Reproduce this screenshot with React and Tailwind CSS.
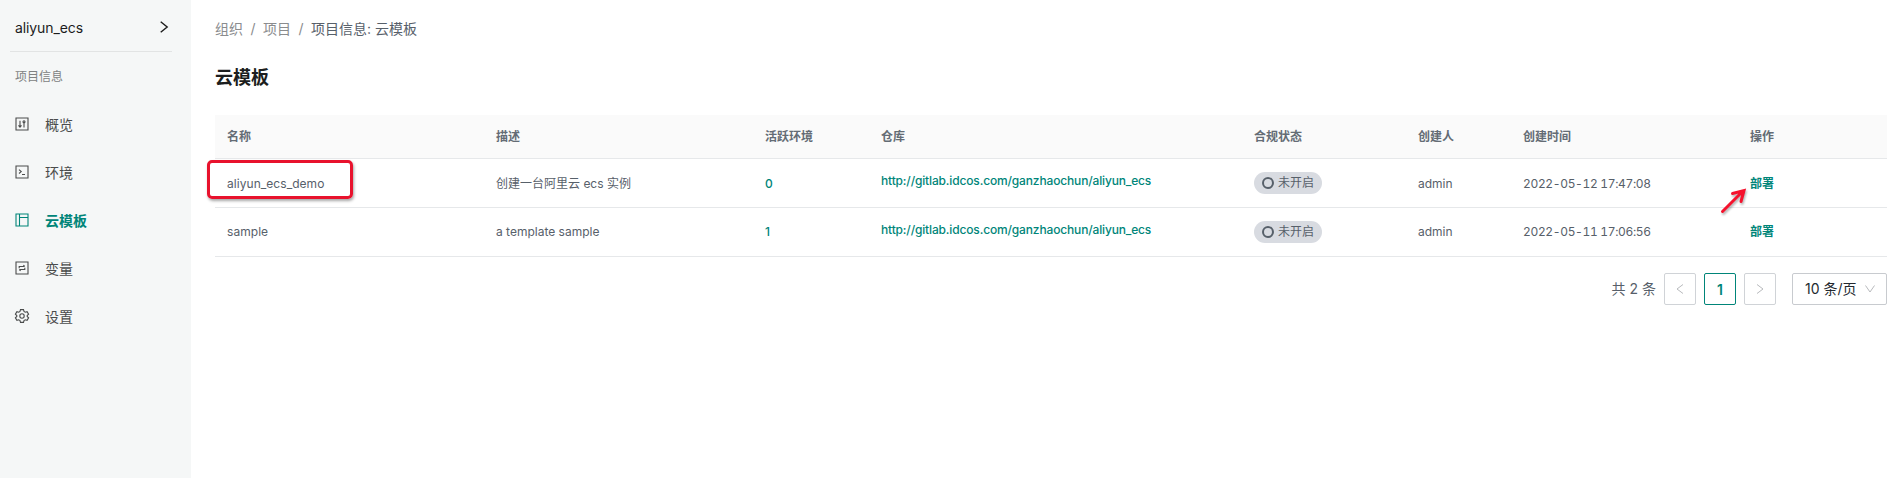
import React from "react";

const icons = {
  overview: (
    <>
      <path d="M1 1h12v12H1z" />
      <path d="M5 3.700v6.300M3.500 8.300L5 10.200l1.500-1.900M9 5.500v5" />
      <circle cx="9" cy="4.800" r="1" />
    </>
  ),
  env: (
    <>
      <path d="M1 1h12v12H1z" />
      <path d="M4 4.700l2.200 1.900L4 8.500M7 9.500h3" />
    </>
  ),
  template: <path d="M1 1h12v12H1zM4.500 1v12M4.500 4.500h8.500" />,
  variable: (
    <>
      <path d="M1 1h12v12H1z" />
      <path d="M4.200 7.200V5.500h5.300M8.400 4.200l1.300 1.300M9.800 6.800v1.700H4.500M5.600 9.800L4.300 8.500" />
    </>
  ),
  settings: (
    <>
      <path d="M5.500 .6h3l.5 1.900 1.200.7 1.900-.5 1.500 2.500-1.400 1.300v1l1.400 1.300-1.500 2.500-1.900-.5-1.200.7-.5 1.900h-3L5 11.500l-1.200-.7-1.900.5L.4 8.800l1.400-1.300v-1L.4 5.200l1.500-2.500 1.900.5L5 2.500z" />
      <circle cx="7" cy="7" r="2.200" />
    </>
  ),
};

const nav = [
  ["overview", "概览"],
  ["env", "环境"],
  ["template", "云模板"],
  ["variable", "变量"],
  ["settings", "设置"],
];

const rows = [
  ["aliyun_ecs_demo", "创建一台阿里云 ecs 实例", "0", "2022-05-12 17:47:08"],
  ["sample", "a template sample", "1", "2022-05-11 17:06:56"],
];

const grid = "grid grid-cols-[269px_269px_116px_373px_164px_105px_227px_149px]";

function Sidebar() {
  return (
    <aside className="h-[478px] w-[191px] shrink-0 bg-[#f5f7f7]">
      <div className="ml-2.5 flex h-[52px] w-[162px] items-center justify-between border-b border-[#e2e4e4] pt-1 pr-[3px] pl-[5px] text-[14px] text-[#1c1c1c]">
        <span className="tracking-[-0.1px]">aliyun_ecs</span>
        <svg className="mb-0.5 h-3.5 w-2.5" viewBox="0 0 10 14" fill="none" stroke="currentColor" strokeWidth="1.4">
          <path d="M1.700 1.700L8.200 7l-6.500 5.300" />
        </svg>
      </div>
      <div className="mt-4 pl-[15px] text-[12px] leading-[18px] text-[#808282]">项目信息</div>
      <nav className="mt-3.5">
        {nav.map(([id, label]) => (
          <a
            key={id}
            className={
              id === "template"
                ? "flex h-12 items-center gap-4 pl-[15px] text-[14px] font-bold text-[#008579]"
                : "flex h-12 items-center gap-4 pl-[15px] text-[14px] text-[#4a4c4c]"
            }
          >
            <svg className="h-3.5 w-3.5 shrink-0 overflow-visible" viewBox="0 0 14 14" fill="none" stroke="currentColor" strokeWidth="1.1">
              {icons[id]}
            </svg>
            <span>{label}</span>
          </a>
        ))}
      </nav>
    </aside>
  );
}

function Row({ data, first }) {
  const [name, desc, count, time] = data;
  const link = "http://gitlab.idcos.com/ganzhaochun/aliyun_ecs";
  const shift = first ? "pt-0.5 " : "";
  return (
    <div className={grid + " h-[49px] items-center border-b border-[#e6e8ea] pl-3 text-[12px]"}>
      <span className={shift + "tracking-[0.05px]"}>{name}</span>
      <span className={shift}>{desc}</span>
      <span className={shift + "font-medium text-[#008579]"}>{count}</span>
      <span className="pb-[5px] font-medium tracking-[-0.15px] text-[#008579]">{link}</span>
      <span className="flex h-[22px] w-[68px] items-center gap-1 rounded-full bg-[#d8dbe1] pl-2">
        <span className="h-3 w-3 rounded-full border-2 border-[#57606a]" />
        未开启
      </span>
      <span className={shift}>admin</span>
      <span className={shift + "tracking-[-0.34px] tabular-nums"}>{time}</span>
      <span className={shift + "font-bold text-[#008579]"}>部署</span>
    </div>
  );
}

function Pagination() {
  return (
    <div className="mt-4 flex h-8 items-center text-[14px]">
      <span className="mr-2 ml-auto pb-0.5">共 2 条</span>
      <span className="mr-2 flex h-8 w-8 items-center justify-center rounded-xs border border-[#d0d3d7] text-[#b8babd]">
        <svg className="h-3 w-3" viewBox="0 0 12 12" fill="none" stroke="currentColor"><path d="M9 1.500L3 6l6 4.500" /></svg>
      </span>
      <span className="mr-2 flex h-8 w-8 items-center justify-center rounded-xs border border-[#008579] font-semibold text-[#008579]">1</span>
      <span className="mr-4 flex h-8 w-8 items-center justify-center rounded-xs border border-[#d0d3d7] text-[#b8babd]">
        <svg className="h-3 w-3" viewBox="0 0 12 12" fill="none" stroke="currentColor"><path d="M3 1.500L9 6l-6 4.500" /></svg>
      </span>
      <span className="flex h-8 w-[95px] items-center justify-between rounded-xs border border-[#c8cbcf] pr-2.5 pl-3 text-[#24292f]">
        <span className="pb-px">10 条/页</span>
        <svg className="h-3 w-3" viewBox="0 0 12 12" fill="none" stroke="#b8babd"><path d="M1.500 2.500L6 9l4.500-6.500" /></svg>
      </span>
    </div>
  );
}

export default function App() {
  return (
    <div className="flex h-[478px] w-[1895px] overflow-hidden bg-white font-['Inter','Noto_Sans_CJK_SC',sans-serif] text-[#57606a]">
      <Sidebar />
      <main className="ml-6 w-[1672px]">
        <div className="mt-[17px] flex h-[22px] items-center gap-[7.5px] text-[14px] text-[#8a8c8e]">
          <span>组织</span>
          <span>/</span>
          <span>项目</span>
          <span>/</span>
          <span className="text-[#57606a]">项目信息: 云模板</span>
        </div>
        <h1 className="mt-[25px] text-[18px] leading-7 font-bold text-[#1c1e20]">云模板</h1>
        <section className="relative mt-[23px]">
          <div className={grid + " h-11 items-center border-b border-[#e6e8ea] bg-[#fafafa] pl-3 text-[12px] font-bold text-[#646c75]"}>
            {["名称", "描述", "活跃环境", "仓库", "合规状态", "创建人", "创建时间", "操作"].map((t) => (
              <span key={t}>{t}</span>
            ))}
          </div>
          {rows.map((r, i) => (
            <Row key={r[0]} data={r} first={i === 0} />
          ))}
          <div className="absolute top-[45px] -left-2 h-[39px] w-[146px] rounded-[5px] border-3 border-[#e8122d] shadow-[1px_2px_3px_rgba(0,0,0,0.35)]" />
          <svg className="absolute top-[71px] left-[1503px] h-8 w-8 drop-shadow-[1px_2px_1px_rgba(0,0,0,0.3)]" viewBox="0 0 32 32" fill="none" stroke="#f5122d" strokeWidth="3" strokeLinecap="round">
            <path d="M4.500 25.500L24 6M14.500 7.500L26 4.500 23 15.500" />
            <path d="M21 5.500l5-1-1.500 5.500z" fill="#f5122d" strokeWidth="1" />
          </svg>
        </section>
        <Pagination />
      </main>
    </div>
  );
}
